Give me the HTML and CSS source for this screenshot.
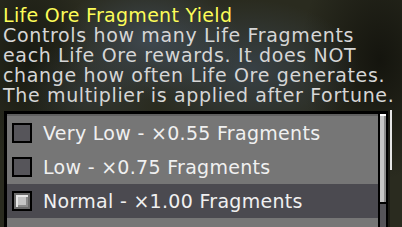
FILE: index.html
```html
<!DOCTYPE html>
<html>
<head>
<meta charset="utf-8">
<link rel="stylesheet" href="styles.css">
</head>
<body>
<div class="screen">
  <div class="tooltip">
    <div class="title">Life Ore Fragment Yield</div>
    <div class="desc">Controls how many Life Fragments</div>
    <div class="desc">each Life Ore rewards. It does NOT</div>
    <div class="desc">change how often Life Ore generates.</div>
    <div class="desc">The multiplier is applied after Fortune.</div>
  </div>
  <div class="frame">
    <div class="main">
      <div class="list">
        <div class="row">
          <span class="box"></span>
          <span class="label">Very Low - ×0.55 Fragments</span>
        </div>
        <div class="row">
          <span class="box"></span>
          <span class="label">Low - ×0.75 Fragments</span>
        </div>
        <div class="row selected">
          <span class="box checked"><span class="knob"></span></span>
          <span class="label">Normal - ×1.00 Fragments</span>
        </div>
        <div class="row"></div>
      </div>
      <div class="scroll">
        <div class="thumb"></div>
        <div class="track"></div>
      </div>
    </div>
    <div class="edge">
      <div class="edge-dark"></div>
      <div class="edge-light"></div>
    </div>
  </div>
</div>
</body>
</html>
```
FILE: styles.css
```css
html, body {
  margin: 0;
  padding: 0;
}
body {
  width: 402px;
  height: 227px;
  overflow: hidden;
  font-family: "DejaVu Sans", "Liberation Sans", sans-serif;
}
.screen {
  width: 402px;
  height: 227px;
  overflow: hidden;
  background:
    radial-gradient(ellipse 90px 60px at 150px 40px, rgba(70, 82, 96, 0.75), rgba(70, 82, 96, 0) 100%),
    radial-gradient(ellipse 110px 70px at 250px 70px, rgba(62, 74, 86, 0.7), rgba(62, 74, 86, 0) 100%),
    radial-gradient(ellipse 70px 50px at 90px 90px, rgba(58, 66, 72, 0.5), rgba(58, 66, 72, 0) 100%),
    radial-gradient(ellipse 60px 110px at 30px 60px, rgba(20, 22, 14, 0.8), rgba(20, 22, 14, 0) 100%),
    radial-gradient(ellipse 80px 120px at 380px 60px, rgba(18, 18, 12, 0.9), rgba(18, 18, 12, 0) 100%),
    #2a2b1f;
}
.tooltip {
  height: 100px;
  padding: 5px 0 0 3px;
}
.title,
.desc {
  height: 20px;
  line-height: 20px;
  font-size: 19px;
  white-space: nowrap;
}
.title {
  color: #fcfc58;
  letter-spacing: 0.3px;
}
.desc {
  color: #d6d6d6;
  letter-spacing: 0.65px;
}
.frame {
  margin: 6px 0 0 4px;
  width: 388px;
  height: 120px;
  display: flex;
}
.main {
  width: 381px;
  border-top: 3px solid #000;
  border-left: 3px solid #000;
  display: grid;
  grid-template-columns: 371px 10px;
}
.list {
  background: #767676;
  border-top: 2px solid #5f5f5f;
}
.row {
  height: 34px;
  display: flex;
  align-items: center;
  gap: 11px;
  padding-left: 5px;
  background: #767676;
}
.row.selected {
  background: #4b4a50;
}
.box {
  width: 16px;
  height: 16px;
  border: 2px solid #000;
  background: #56555a;
  flex: none;
  display: flex;
}
.box.checked {
  background: #6a6a6a;
  padding: 2px;
  width: 12px;
  height: 12px;
}
.knob {
  width: 12px;
  height: 12px;
  background: #c4c4c4;
  box-shadow: inset 2px 2px 0 #e8e8e8, inset -2px -2px 0 #8a8a8a;
}
.label {
  color: #f0f0f0;
  font-size: 19px;
  line-height: 20px;
  letter-spacing: 0.3px;
  white-space: nowrap;
}
.scroll {
  display: flex;
  flex-direction: column;
  background: #000;
}
.thumb {
  height: 88px;
  border: 2px solid #000;
  border-top: 0;
  background: #c6c6c6;
  box-shadow: inset 0 2px 0 #ffffff, inset -2px 0 0 #8c8c8c;
}
.track {
  flex: 1;
  margin: 0 2px;
  background: #555459;
}
.edge {
  width: 4px;
  display: flex;
  margin-top: -1px;
}
.edge-dark {
  width: 2px;
  background: #1b1b14;
}
.edge-light {
  width: 2px;
  height: 60px;
  background: #e6e6e6;
}
```
